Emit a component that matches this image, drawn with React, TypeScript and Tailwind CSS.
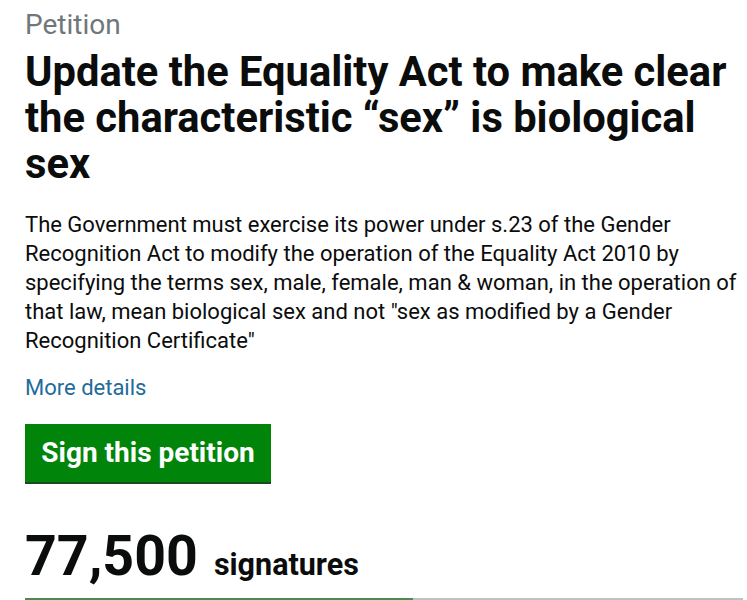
import React from "react";

export default function App() {
  return (
    <div
      className="w-[747px] h-[600px] overflow-hidden bg-white pl-[25px] pr-[4px]"
      style={{ fontFamily: "Roboto, 'Liberation Sans', sans-serif" }}
    >
      <div className="pt-[7px] text-[28px] leading-[36px] text-[#6f777b]">Petition</div>
      <h1 className="mt-[6px] text-[41.7px] font-bold leading-[46px] text-[#0b0c0c]">
        Update the Equality Act to make clear the characteristic “sex” is biological sex
      </h1>
      <p className="mt-[23px] text-[22px] leading-[29px] text-[#0b0c0c]">
        The Government must exercise its power under s.23 of the Gender Recognition Act to modify the operation of the Equality Act 2010 by specifying the terms sex, male, female, man &amp; woman, in the operation of that law, mean biological sex and not "sex as modified by a Gender Recognition Certificate"
      </p>
      <div className="mt-[18px] text-[22px] leading-[29px] text-[#1f6b9a]">More details</div>
      <div className="mt-[22px] flex">
        <div className="h-[60px] w-[246px] bg-[#00850a] border-b-[2px] border-[#1d4a1d] flex items-center justify-center text-white text-[28px] font-bold">
          Sign this petition
        </div>
      </div>
      <div className="mt-[43px] h-[60px] flex items-baseline gap-[16px] text-[#0b0c0c] font-bold">
        <span className="text-[55.5px] leading-[60px]">77,500</span>
        <span className="text-[30.5px] leading-none">signatures</span>
      </div>
      <div className="mt-[11px] flex h-[6px]">
        <div className="w-[388px] bg-[#4d8a4d]"></div>
        <div className="flex-1 bg-[#bfc1c3]"></div>
      </div>
    </div>
  );
}
